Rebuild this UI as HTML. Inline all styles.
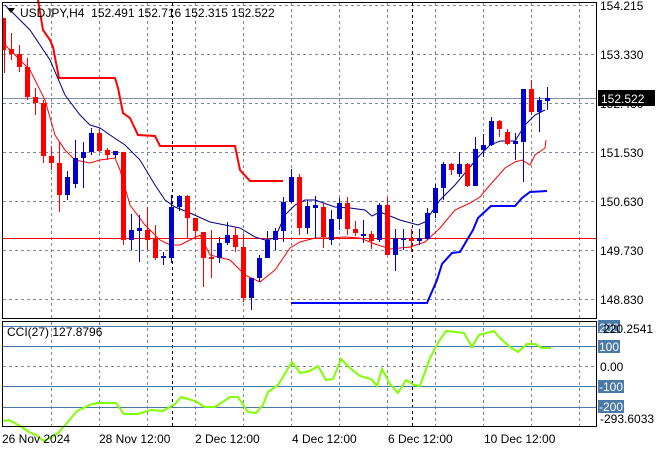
<!DOCTYPE html>
<html><head><style>
body{margin:0;background:#fff;width:660px;height:450px;overflow:hidden}
svg{display:block;font-family:"Liberation Sans",sans-serif}
</style></head><body>
<svg width="660" height="450" viewBox="0 0 660 450" xmlns="http://www.w3.org/2000/svg">
<rect width="660" height="450" fill="#fff"/>
<g stroke="#808a94" stroke-dasharray="3,3" stroke-width="1">
<line x1="3" y1="5.5" x2="596" y2="5.5"/><line x1="3" y1="54.5" x2="596" y2="54.5"/><line x1="3" y1="103.5" x2="596" y2="103.5"/><line x1="3" y1="152.5" x2="596" y2="152.5"/><line x1="3" y1="201.5" x2="596" y2="201.5"/><line x1="3" y1="250.5" x2="596" y2="250.5"/><line x1="3" y1="299.5" x2="596" y2="299.5"/>
<line x1="51.5" y1="3" x2="51.5" y2="318"/><line x1="99.5" y1="3" x2="99.5" y2="318"/><line x1="147.5" y1="3" x2="147.5" y2="318"/><line x1="195.5" y1="3" x2="195.5" y2="318"/><line x1="243.5" y1="3" x2="243.5" y2="318"/><line x1="291.5" y1="3" x2="291.5" y2="318"/><line x1="339.5" y1="3" x2="339.5" y2="318"/><line x1="387.5" y1="3" x2="387.5" y2="318"/><line x1="435.5" y1="3" x2="435.5" y2="318"/><line x1="483.5" y1="3" x2="483.5" y2="318"/><line x1="531.5" y1="3" x2="531.5" y2="318"/><line x1="579.5" y1="3" x2="579.5" y2="318"/>
<line x1="51.5" y1="322" x2="51.5" y2="426"/><line x1="99.5" y1="322" x2="99.5" y2="426"/><line x1="147.5" y1="322" x2="147.5" y2="426"/><line x1="195.5" y1="322" x2="195.5" y2="426"/><line x1="243.5" y1="322" x2="243.5" y2="426"/><line x1="291.5" y1="322" x2="291.5" y2="426"/><line x1="339.5" y1="322" x2="339.5" y2="426"/><line x1="387.5" y1="322" x2="387.5" y2="426"/><line x1="435.5" y1="322" x2="435.5" y2="426"/><line x1="483.5" y1="322" x2="483.5" y2="426"/><line x1="531.5" y1="322" x2="531.5" y2="426"/><line x1="579.5" y1="322" x2="579.5" y2="426"/>
<line x1="3" y1="366.5" x2="596" y2="366.5"/>
</g>
<g stroke="#000" stroke-dasharray="3,3"><line x1="172.5" y1="3" x2="172.5" y2="426"/><line x1="412.5" y1="3" x2="412.5" y2="426"/></g>
<line x1="3" y1="98.5" x2="596" y2="98.5" stroke="#8090a0"/>
<line x1="3" y1="238.5" x2="596" y2="238.5" stroke="#ff0000"/>
<g stroke="#4a7aa8"><line x1="3" y1="326.5" x2="596" y2="326.5"/><line x1="3" y1="346.5" x2="596" y2="346.5"/><line x1="3" y1="386.5" x2="596" y2="386.5"/><line x1="3" y1="407.5" x2="596" y2="407.5"/></g>
<polyline fill="none" stroke="#ff0000" stroke-width="2" points="38,0 43,30 50,40 53,47 59,78 115,78 118,88 123,113 130,118 138,135 155,136 160,146 235,146 240,170 250,181 283,181"/>
<polyline fill="none" stroke="#0000ff" stroke-width="2" points="291,303 427,303 437,280 442,264 452,253 460,252 467,240 473,230 478,218 491,206 515,206 522,198 530,192 547,191"/>
<polyline fill="none" stroke="#000080" stroke-width="1" points="5,5 30,30 50,60 65,95 80,115 90,125 100,128 110,135 125,145 140,160 155,185 165,200 175,207 190,213 210,222 240,228 255,237 265,240 275,238 285,215 295,205 305,200 315,200 335,207 350,208 365,210 372,216 380,212 400,220 418,225 425,222 440,200 455,185 470,167 480,155 490,145 500,141 515,141 525,125 535,115 545,110"/>
<polyline fill="none" stroke="#ff0000" stroke-width="1" points="5,45 15,55 30,70 45,100 55,135 65,150 75,160 90,163 100,160 115,158 120,170 130,205 145,225 160,240 170,245 180,245 190,240 200,235 210,255 230,260 245,275 260,282 275,270 290,248 300,242 315,238 330,238 345,237 360,238 375,244 390,249 410,247 425,242 440,228 455,210 470,203 480,197 490,185 505,168 515,162 522,160 530,165 535,155 545,148 546,140"/>
<g id="c"></g>
<g>
<!-- candles: x, top, bottom, wickTop, wickBottom, color -->
</g>
<g stroke-width="1">
<line x1="4.5" y1="18" x2="4.5" y2="73" stroke="#f00"/><rect x="3" y="18" width="3" height="32" fill="#f00"/>
<line x1="11.5" y1="33" x2="11.5" y2="60" stroke="#f00"/><rect x="9" y="49" width="5" height="5" fill="#f00"/>
<line x1="19.5" y1="45" x2="19.5" y2="72" stroke="#f00"/><rect x="17" y="54" width="5" height="13" fill="#f00"/>
<line x1="27.5" y1="58" x2="27.5" y2="100" stroke="#f00"/><rect x="25" y="67" width="5" height="30" fill="#f00"/>
<line x1="35.5" y1="88" x2="35.5" y2="115" stroke="#f00"/><rect x="33" y="97" width="5" height="6" fill="#f00"/>
<line x1="43.5" y1="100" x2="43.5" y2="163" stroke="#f00"/><rect x="41" y="103" width="5" height="53" fill="#f00"/>
<line x1="51.5" y1="146" x2="51.5" y2="170" stroke="#f00"/><rect x="49" y="156" width="5" height="7" fill="#f00"/>
<line x1="59.5" y1="142" x2="59.5" y2="212" stroke="#f00"/><rect x="57" y="163" width="5" height="32" fill="#f00"/>
<line x1="67.5" y1="171" x2="67.5" y2="200" stroke="#00c"/><rect x="65" y="177" width="5" height="18" fill="#00c"/>
<line x1="75.5" y1="140" x2="75.5" y2="188" stroke="#00c"/><rect x="73" y="158" width="5" height="26" fill="#00c"/>
<line x1="83.5" y1="142" x2="83.5" y2="188" stroke="#00c"/><rect x="81" y="152" width="5" height="6" fill="#00c"/>
<line x1="91.5" y1="128" x2="91.5" y2="155" stroke="#00c"/><rect x="89" y="133" width="5" height="19" fill="#00c"/>
<line x1="99.5" y1="128" x2="99.5" y2="152" stroke="#f00"/><rect x="97" y="133" width="5" height="18" fill="#f00"/>
<line x1="107.5" y1="148" x2="107.5" y2="160" stroke="#f00"/><rect x="105" y="150" width="5" height="5" fill="#f00"/>
<line x1="115.5" y1="151" x2="115.5" y2="158" stroke="#00c"/><rect x="113" y="151" width="5" height="4" fill="#00c"/>
<line x1="123.5" y1="152" x2="123.5" y2="245" stroke="#f00"/><rect x="121" y="152" width="5" height="88" fill="#f00"/>
<line x1="131.5" y1="214" x2="131.5" y2="250" stroke="#00c"/><rect x="129" y="230" width="5" height="10" fill="#00c"/>
<line x1="139.5" y1="215" x2="139.5" y2="262" stroke="#00c"/><rect x="137" y="228" width="5" height="3" fill="#00c"/>
<line x1="147.5" y1="207" x2="147.5" y2="250" stroke="#f00"/><rect x="145" y="230" width="5" height="10" fill="#f00"/>
<line x1="155.5" y1="225" x2="155.5" y2="260" stroke="#f00"/><rect x="153" y="238" width="5" height="20" fill="#f00"/>
<line x1="163.5" y1="252" x2="163.5" y2="265" stroke="#00c"/><rect x="161" y="256" width="5" height="2" fill="#00c"/>
<line x1="171.5" y1="195" x2="171.5" y2="263" stroke="#00c"/><rect x="169" y="207" width="5" height="51" fill="#00c"/>
<line x1="179.5" y1="195" x2="179.5" y2="211" stroke="#00c"/><rect x="177" y="196" width="5" height="11" fill="#00c"/>
<line x1="187.5" y1="195" x2="187.5" y2="238" stroke="#f00"/><rect x="185" y="196" width="5" height="22" fill="#f00"/>
<line x1="195.5" y1="218" x2="195.5" y2="238" stroke="#f00"/><rect x="193" y="218" width="5" height="13" fill="#f00"/>
<line x1="203.5" y1="232" x2="203.5" y2="287" stroke="#f00"/><rect x="201" y="232" width="5" height="26" fill="#f00"/>
<line x1="211.5" y1="230" x2="211.5" y2="278" stroke="#f00"/><rect x="209" y="257" width="5" height="2" fill="#f00"/>
<line x1="219.5" y1="237" x2="219.5" y2="263" stroke="#00c"/><rect x="217" y="243" width="5" height="15" fill="#00c"/>
<line x1="227.5" y1="222" x2="227.5" y2="245" stroke="#00c"/><rect x="225" y="235" width="5" height="8" fill="#00c"/>
<line x1="235.5" y1="227" x2="235.5" y2="252" stroke="#f00"/><rect x="233" y="235" width="5" height="12" fill="#f00"/>
<line x1="243.5" y1="234" x2="243.5" y2="302" stroke="#f00"/><rect x="241" y="247" width="5" height="51" fill="#f00"/>
<line x1="251.5" y1="278" x2="251.5" y2="310" stroke="#00c"/><rect x="249" y="278" width="5" height="20" fill="#00c"/>
<line x1="259.5" y1="255" x2="259.5" y2="282" stroke="#00c"/><rect x="257" y="258" width="5" height="20" fill="#00c"/>
<line x1="267.5" y1="231" x2="267.5" y2="258" stroke="#00c"/><rect x="265" y="240" width="5" height="18" fill="#00c"/>
<line x1="275.5" y1="228" x2="275.5" y2="250" stroke="#00c"/><rect x="273" y="231" width="5" height="9" fill="#00c"/>
<line x1="283.5" y1="197" x2="283.5" y2="242" stroke="#00c"/><rect x="281" y="202" width="5" height="29" fill="#00c"/>
<line x1="291.5" y1="169" x2="291.5" y2="203" stroke="#00c"/><rect x="289" y="177" width="5" height="25" fill="#00c"/>
<line x1="299.5" y1="174" x2="299.5" y2="235" stroke="#f00"/><rect x="297" y="177" width="5" height="51" fill="#f00"/>
<line x1="307.5" y1="200" x2="307.5" y2="234" stroke="#00c"/><rect x="305" y="206" width="5" height="22" fill="#00c"/>
<line x1="315.5" y1="196" x2="315.5" y2="238" stroke="#00c"/><rect x="313" y="205" width="5" height="3" fill="#00c"/>
<line x1="323.5" y1="203" x2="323.5" y2="248" stroke="#f00"/><rect x="321" y="207" width="5" height="30" fill="#f00"/>
<line x1="331.5" y1="210" x2="331.5" y2="245" stroke="#00c"/><rect x="329" y="219" width="5" height="21" fill="#00c"/>
<line x1="339.5" y1="198" x2="339.5" y2="230" stroke="#00c"/><rect x="337" y="203" width="5" height="16" fill="#00c"/>
<line x1="347.5" y1="197" x2="347.5" y2="235" stroke="#f00"/><rect x="345" y="203" width="5" height="26" fill="#f00"/>
<line x1="355.5" y1="221" x2="355.5" y2="236" stroke="#f00"/><rect x="353" y="229" width="5" height="4" fill="#f00"/>
<line x1="363.5" y1="220" x2="363.5" y2="243" stroke="#00c"/><rect x="361" y="234" width="5" height="2" fill="#00c"/>
<line x1="371.5" y1="231" x2="371.5" y2="249" stroke="#f00"/><rect x="369" y="234" width="5" height="7" fill="#f00"/>
<line x1="379.5" y1="203" x2="379.5" y2="242" stroke="#00c"/><rect x="377" y="205" width="5" height="35" fill="#00c"/>
<line x1="387.5" y1="197" x2="387.5" y2="255" stroke="#f00"/><rect x="385" y="205" width="5" height="50" fill="#f00"/>
<line x1="395.5" y1="229" x2="395.5" y2="271" stroke="#00c"/><rect x="393" y="238" width="5" height="17" fill="#00c"/>
<line x1="403.5" y1="229" x2="403.5" y2="250" stroke="#00c"/><rect x="401" y="238" width="5" height="2" fill="#00c"/>
<line x1="411.5" y1="229" x2="411.5" y2="252" stroke="#f00"/><rect x="409" y="238" width="5" height="3" fill="#f00"/>
<line x1="419.5" y1="229" x2="419.5" y2="245" stroke="#00c"/><rect x="417" y="238" width="5" height="3" fill="#00c"/>
<line x1="427.5" y1="208" x2="427.5" y2="240" stroke="#00c"/><rect x="425" y="213" width="5" height="26" fill="#00c"/>
<line x1="435.5" y1="184" x2="435.5" y2="218" stroke="#00c"/><rect x="433" y="188" width="5" height="25" fill="#00c"/>
<line x1="443.5" y1="162" x2="443.5" y2="200" stroke="#00c"/><rect x="441" y="164" width="5" height="24" fill="#00c"/>
<line x1="451.5" y1="163" x2="451.5" y2="175" stroke="#f00"/><rect x="449" y="164" width="5" height="6" fill="#f00"/>
<line x1="459.5" y1="152" x2="459.5" y2="177" stroke="#00c"/><rect x="457" y="164" width="5" height="10" fill="#00c"/>
<line x1="467.5" y1="163" x2="467.5" y2="187" stroke="#f00"/><rect x="465" y="164" width="5" height="22" fill="#f00"/>
<line x1="475.5" y1="137" x2="475.5" y2="186" stroke="#00c"/><rect x="473" y="149" width="5" height="37" fill="#00c"/>
<line x1="483.5" y1="134" x2="483.5" y2="157" stroke="#00c"/><rect x="481" y="145" width="5" height="5" fill="#00c"/>
<line x1="491.5" y1="117" x2="491.5" y2="146" stroke="#00c"/><rect x="489" y="121" width="5" height="24" fill="#00c"/>
<line x1="499.5" y1="120" x2="499.5" y2="137" stroke="#f00"/><rect x="497" y="121" width="5" height="8" fill="#f00"/>
<line x1="507.5" y1="129" x2="507.5" y2="145" stroke="#f00"/><rect x="505" y="132" width="5" height="12" fill="#f00"/>
<line x1="515.5" y1="133" x2="515.5" y2="160" stroke="#00c"/><rect x="513" y="141" width="5" height="3" fill="#00c"/>
<line x1="523.5" y1="89" x2="523.5" y2="182" stroke="#00c"/><rect x="521" y="89" width="5" height="53" fill="#00c"/>
<line x1="531.5" y1="80" x2="531.5" y2="115" stroke="#f00"/><rect x="529" y="89" width="5" height="23" fill="#f00"/>
<line x1="539.5" y1="97" x2="539.5" y2="132" stroke="#00c"/><rect x="537" y="100" width="5" height="12" fill="#00c"/>
<line x1="547.5" y1="87" x2="547.5" y2="110" stroke="#00c"/><rect x="545" y="98" width="5" height="3" fill="#00c"/>
</g>
<polyline fill="none" stroke="#7fff00" stroke-width="2" points="3,421 9,420 20,426 29,432 36,435 44,441 50,438 58,433 67,423 77,411 92,404 100,403 116,403 124,414 138,414 151,410 163,411 175,404 181,397 195,401 205,407 215,407 230,397 238,397 248,412 256,413 263,405 268,392 278,385 292,362 300,373 310,371 318,366 326,380 333,379 341,359 350,368 360,376 371,379 377,386 382,369 390,384 398,393 406,380 414,385 420,386 430,358 439,341 446,331 456,332 464,333 472,347 479,335 494,331 500,338 510,347 518,352 527,344 535,344 542,348 551,348"/>
<rect x="2.5" y="2.5" width="594" height="316" fill="none" stroke="#000"/>
<rect x="2.5" y="321.5" width="594" height="105" fill="none" stroke="#000"/>
<polygon points="7,8 15,8 11,13" fill="#000"/>
<text x="20" y="17" font-size="12" fill="#000">USDJPY,H4&#160;&#160;152.491 152.716 152.315 152.522</text>
<text x="7" y="336" font-size="12" fill="#000">CCI(27) 127.8796</text>
<g font-size="12" fill="#000">
<text x="600" y="10">154.215</text><text x="600" y="59">153.330</text><text x="600" y="108">152.430</text><text x="600" y="157">151.530</text><text x="600" y="206">150.630</text><text x="600" y="255">149.730</text><text x="600" y="304">148.830</text>
</g>
<rect x="598" y="90" width="57" height="16" fill="#000"/>
<text x="601" y="103" font-size="12" fill="#fff">152.522</text>
<g fill="#4a7aa8"><rect x="598" y="320" width="22" height="13"/><rect x="598" y="340" width="22" height="13"/><rect x="598" y="380" width="26" height="13"/><rect x="598" y="400" width="26" height="13"/></g>
<g font-size="12" fill="#000">
<text x="599" y="332" fill="#fff">200</text><text x="603" y="333">220.2541</text>
<text x="599" y="351" fill="#fff">100</text>
<text x="600" y="371">0.00</text>
<text x="599" y="391" fill="#fff">-100</text>
<text x="599" y="411" fill="#fff">-200</text>
<text x="600" y="423">-293.6033</text>
<text x="2" y="443">26 Nov 2024</text><text x="99" y="443">28 Nov 12:00</text><text x="195" y="443">2 Dec 12:00</text><text x="292" y="443">4 Dec 12:00</text><text x="388" y="443">6 Dec 12:00</text><text x="484" y="443">10 Dec 12:00</text>
</g>
</svg>
</body></html>
